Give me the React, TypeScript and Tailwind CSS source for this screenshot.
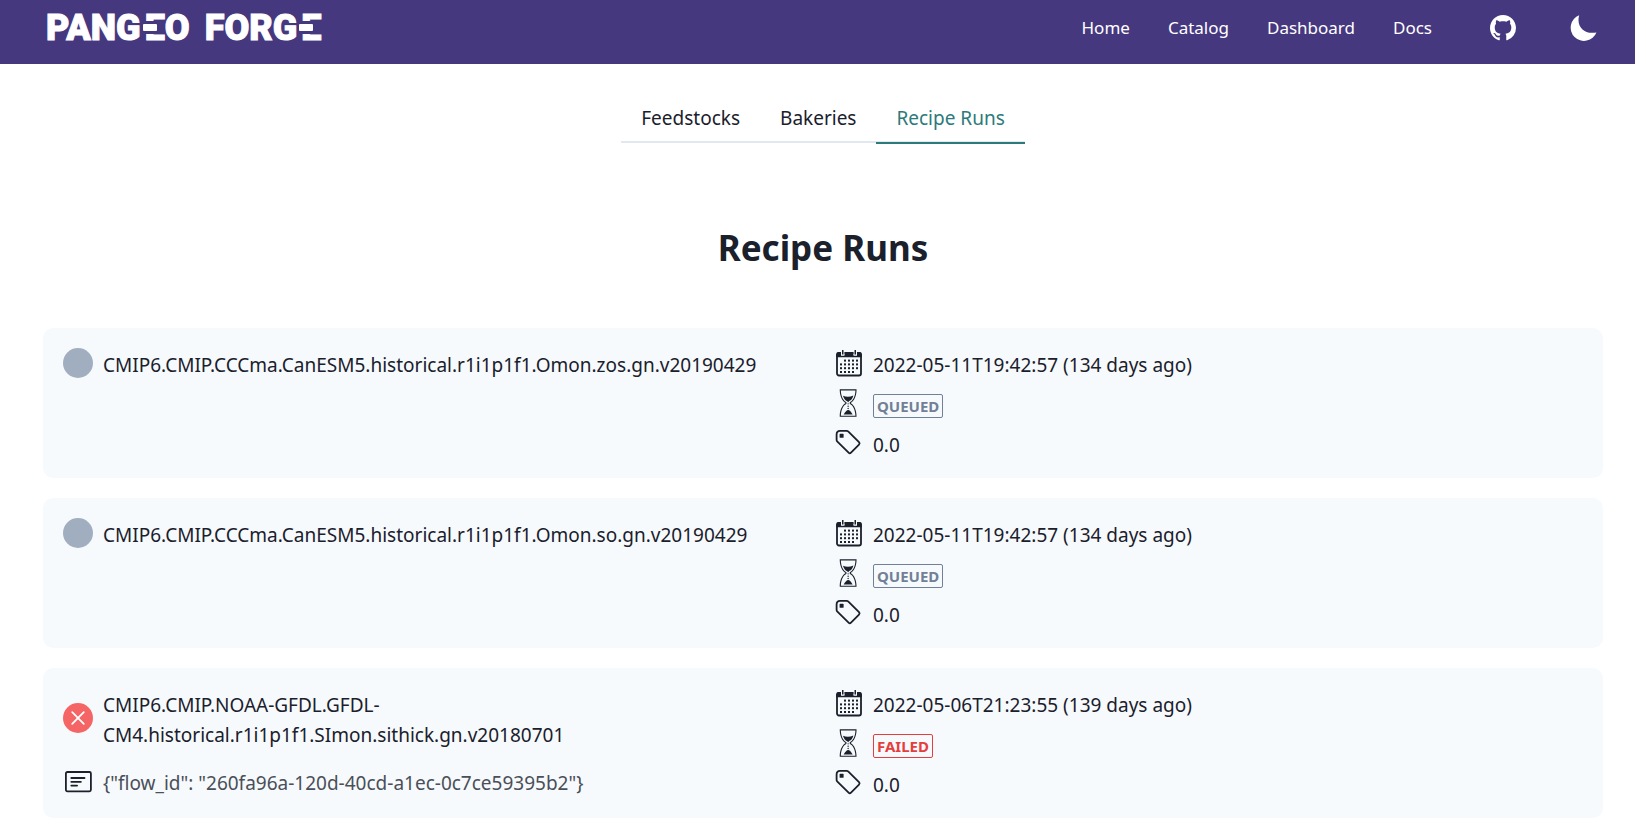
import React from "react";
import { GiSandsOfTime } from "react-icons/gi";
import { BsGithub } from "react-icons/bs";

const navLinks = ["Home", "Catalog", "Dashboard", "Docs"];
const tabs = ["Feedstocks", "Bakeries", "Recipe Runs"];
const activeTab = "Recipe Runs";

type Status = "QUEUED" | "FAILED";

interface Run {
  name: string;
  date: string;
  status: Status;
  version: string;
  message?: string;
}

const runs: Run[] = [
  {
    name: "CMIP6.CMIP.CCCma.CanESM5.historical.r1i1p1f1.Omon.zos.gn.v20190429",
    date: "2022-05-11T19:42:57 (134 days ago)",
    status: "QUEUED",
    version: "0.0",
  },
  {
    name: "CMIP6.CMIP.CCCma.CanESM5.historical.r1i1p1f1.Omon.so.gn.v20190429",
    date: "2022-05-11T19:42:57 (134 days ago)",
    status: "QUEUED",
    version: "0.0",
  },
  {
    name: "CMIP6.CMIP.NOAA-GFDL.GFDL-CM4.historical.r1i1p1f1.SImon.sithick.gn.v20180701",
    date: "2022-05-06T21:23:55 (139 days ago)",
    status: "FAILED",
    version: "0.0",
    message: '{"flow_id": "260fa96a-120d-40cd-a1ec-0c7ce59395b2"}',
  },
];

const badgeStyles: Record<Status, string> = {
  QUEUED: "border-[#718096] text-[#718096]",
  FAILED: "border-[#e53e3e] text-[#e53e3e]",
};

/** The wordmark's E is cut into three bars, the middle one shifted left. */
function BarE() {
  return (
    <span className="relative ml-1 inline-block">
      E
      <span className="absolute top-[13px] left-0 h-[13px] w-full bg-[#46387f]" />
      <span className="absolute top-4 -left-[2px] h-[7px] w-[14px] rounded-[1px] bg-white" />
    </span>
  );
}

function Wordmark() {
  return (
    <a
      href="#"
      className="flex gap-[15px] font-['Roboto',sans-serif] text-4xl/10 font-black whitespace-nowrap text-white [-webkit-text-stroke:1px_white]"
    >
      <span>
        PANG
        <BarE />O
      </span>
      <span>
        FORG
        <BarE />
      </span>
    </a>
  );
}

function MoonIcon() {
  return (
    <svg viewBox="0 0 27 27" className="size-[27px]" fill="currentColor" aria-hidden="true">
      <path d="M9.2 .2A13.3 13.3 0 1 0 26.4 17.4C14 20 6 11 9.2 .2z" />
    </svg>
  );
}

const calendarDots = [
  [1, 2, 3, 4],
  [0, 1, 2, 3, 4],
  [0, 1, 2, 3, 4],
  [0, 1, 2, 3],
];

function CalendarIcon() {
  return (
    <svg viewBox="0 0 30 30" className="size-[30px]" fill="currentColor" aria-hidden="true">
      <rect x="4" y="5" width="24" height="22.5" rx="2" fill="none" stroke="currentColor" strokeWidth="1.8" />
      <path d="M3.2 6.5 a2.4 2.4 0 0 1 2.4-2.4 h2.4 v3.4 h3.4 v-3.4 h9.2 v3.4 h3.4 v-3.4 h2.4 a2.4 2.4 0 0 1 2.4 2.4 v2.8 h-25.6z" />
      <path d="M8 2.5h3.4v5h-3.4z M20.6 2.5h3.4v5h-3.4z" fill="#f7fafc" />
      <path d="M9 2h1.5v4.4h-1.5z M21.5 2h1.5v4.4h-1.5z" />
      {calendarDots.map((cols, row) =>
        cols.map((col) => (
          <rect key={`${row}-${col}`} x={7 + col * 4} y={11.6 + row * 3.8} width="2" height="2" />
        )),
      )}
    </svg>
  );
}

function TagIcon() {
  return (
    <svg viewBox="0 0 30 30" className="size-[30px]" fill="none" stroke="currentColor" strokeWidth="1.8" strokeLinejoin="round" aria-hidden="true">
      <path d="M7 2.9h6.6c.7 0 1.3.3 1.8.8l10.6 10.5c.8.8.8 1.6 0 2.4l-8 8.1c-.8.8-1.6.8-2.4 0L4.4 13.7c-.5-.5-.8-1.1-.8-1.8V6.5c0-2 1.4-3.6 3.4-3.6z" />
      <rect x="6.6" y="5.8" width="4" height="4" rx="0.6" fill="currentColor" stroke="none" />
    </svg>
  );
}

function NoteIcon() {
  return (
    <svg viewBox="0 0 30 30" className="size-[30px]" fill="none" stroke="currentColor" strokeWidth="1.8" strokeLinecap="round" aria-hidden="true">
      <rect x="2.9" y="4" width="25" height="19.3" rx="1.5" />
      <path d="M8.3 10h13.2 M8.3 13.8h9.6 M8.3 17.6h5.8" />
    </svg>
  );
}

function StatusIcon({ status }: { status: Status }) {
  if (status === "QUEUED") {
    return <span className="size-[30px] shrink-0 rounded-full bg-[#a0aec0]" role="img" aria-label="Queued" />;
  }
  return (
    <svg viewBox="0 0 30 30" className="size-[30px] shrink-0" role="img" aria-label="Failed">
      <circle cx="15" cy="15" r="15" fill="#f56565" />
      <path d="M9.2 9.2l11.6 11.6M20.8 9.2L9.2 20.8" stroke="white" strokeWidth="1.8" strokeLinecap="round" />
    </svg>
  );
}

function Detail({ icon, children }: { icon: React.ReactNode; children: React.ReactNode }) {
  return (
    <li className="flex h-[30px] gap-[10px]">
      <span className="flex w-[30px] shrink-0 items-center justify-center">{icon}</span>
      <span className="flex items-center pt-1">{children}</span>
    </li>
  );
}

function RunCard({ run }: { run: Run }) {
  return (
    <article className="grid grid-cols-2 gap-5 rounded-[10px] bg-[#f7fafc] p-5">
      <div className="flex flex-col gap-5">
        <div className="flex items-center gap-[10px]">
          <StatusIcon status={run.status} />
          <h2 className="-mb-0.5 pt-0.5 leading-[30px]">{run.name}</h2>
        </div>
        {run.message && (
          <div className="flex gap-[10px] leading-[30px]">
            <NoteIcon />
            <p className="text-[#4a4f59]">{run.message}</p>
          </div>
        )}
      </div>
      <ul className="flex flex-col gap-[10px]">
        <Detail icon={<CalendarIcon />}>
          <time>{run.date}</time>
        </Detail>
        <Detail icon={<GiSandsOfTime className="size-[30px]" />}>
          <span className={`mt-0.5 rounded-[2px] border px-[3px] text-[15px]/[22px] font-bold ${badgeStyles[run.status]}`}>
            {run.status}
          </span>
        </Detail>
        <Detail icon={<TagIcon />}>{run.version}</Detail>
      </ul>
    </article>
  );
}

export default function App() {
  return (
    <div className="min-h-screen bg-white font-['Noto_Sans',sans-serif] text-[19px] text-[#1a202c]">
      <header className="flex h-16 items-center justify-between bg-[#46387f] pr-[38px] pb-2 pl-[46px] text-white">
        <Wordmark />
        <nav className="flex items-center gap-[38px] text-[17px]">
          {navLinks.map((link) => (
            <a key={link} href="#">
              {link}
            </a>
          ))}
          <a href="#" aria-label="GitHub" className="ml-5">
            <BsGithub className="size-[26px]" />
          </a>
          <button type="button" aria-label="Toggle dark mode" className="ml-4">
            <MoonIcon />
          </button>
        </nav>
      </header>

      <main className="pr-8 pl-[43px]">
        <div className="flex justify-center pt-[30px]">
          <div role="tablist" className="flex border-b-2 border-[#e2e8f0]">
            {tabs.map((tab) => (
              <button
                key={tab}
                type="button"
                role="tab"
                aria-selected={tab === activeTab}
                className={`-mb-[3px] border-b-2 px-5 py-[9px] leading-[30px] ${
                  tab === activeTab ? "border-[#2c7a7b] text-[#2c7a7b]" : "border-transparent"
                }`}
              >
                {tab}
              </button>
            ))}
          </div>
        </div>

        <h1 className="mt-[81px] text-center text-[35px]/12 font-bold">Recipe Runs</h1>

        <section className="mt-14 flex flex-col gap-5">
          {runs.map((run) => (
            <RunCard key={run.name} run={run} />
          ))}
        </section>
      </main>
    </div>
  );
}
